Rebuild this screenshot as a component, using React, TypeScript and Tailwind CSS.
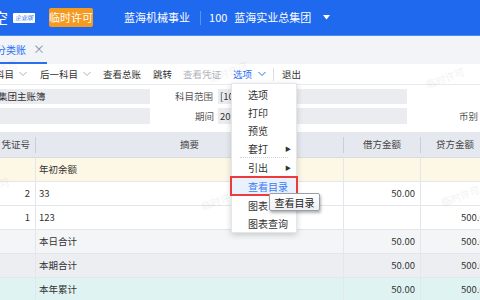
import React from "react";

const F = { fontFamily: '"Noto Sans CJK SC", "Noto Sans", sans-serif' } as const;

function Chev({ color = "#8a94a6", ml = 5 }: { color?: string; ml?: number }) {
  return (
    <svg width="8" height="6" viewBox="0 0 8 6" className="shrink-0" style={{ marginLeft: ml }}>
      <path d="M0.5 1 L4 4.5 L7.5 1" fill="none" stroke={color} strokeWidth="1" />
    </svg>
  );
}

function Wm({ x, y }: { x: number; y: number }) {
  return (
    <div
      className="absolute text-[10px] text-[#000] opacity-[0.05] pointer-events-none whitespace-nowrap -rotate-[20deg]"
      style={{ left: x, top: y }}
    >
      临时许可
    </div>
  );
}

type Row = { bg: string; no?: string; desc: string; debit?: string; credit?: string };

const rows: Row[] = [
  { bg: "bg-[#fdf8e6]", desc: "年初余额" },
  { bg: "bg-white", no: "2", desc: "33", debit: "50.00" },
  { bg: "bg-white", no: "1", desc: "123", debit: "", credit: "500.00" },
  { bg: "bg-[#f3f5f7]", desc: "本日合计", debit: "50.00", credit: "500.00" },
  { bg: "bg-[#eceef2]", desc: "本期合计", debit: "50.00", credit: "500.00" },
  { bg: "bg-[#dff3f2]", desc: "本年累计", debit: "50.00", credit: "500.00" },
];

export default function App() {
  return (
    <div className="relative w-[480px] h-[300px] overflow-hidden bg-white text-[#333] whitespace-nowrap" style={F}>
      {/* header */}
      <div className="h-[36px] bg-[#1f69ee] border-b border-[#4b8af3] flex items-center text-white">
        <span className="ml-[-7px] text-[15px] leading-none shrink-0">空</span>
        <span className="ml-[5px] bg-white text-[#1f69ee] text-[6px] leading-none px-[2px] py-[2px] rounded-[1px] italic shrink-0">企业版</span>
        <span className="ml-[14px] bg-[#f59a1f] text-white text-[11px] h-[19px] w-[44px] flex items-center justify-center rounded-[2px] shrink-0">临时许可</span>
        <span className="ml-[31px] text-[11px] shrink-0">蓝海机械事业</span>
        <span className="ml-[10px] w-px h-[14px] bg-[#5a93f3] shrink-0" />
        <span className="ml-[8px] text-[11px] shrink-0">100</span>
        <span className="ml-[7px] text-[11px] shrink-0">蓝海实业总集团</span>
        <svg width="7" height="5" viewBox="0 0 7 5" className="ml-[12px] shrink-0">
          <path d="M0 0 L7 0 L3.5 4.5 Z" fill="white" />
        </svg>
      </div>

      {/* tab bar */}
      <div className="h-[28px] bg-[#f2f4f8] relative flex items-end">
        <div className="h-[28px] w-[47px] flex items-center border-b-2 border-[#2a6ef2] shrink-0">
          <span className="ml-[-4px] text-[10px] text-[#2a6ef2]">分类账</span>
          <span className="ml-[7px] text-[12px] text-[#8a94a6] leading-none">×</span>
        </div>
      </div>

      {/* toolbar */}
      <div className="h-[21px] bg-white flex items-center text-[9.5px] text-[#333] border-b border-[#e8eaee]">
        <span className="ml-[-5px] shrink-0">科目</span>
        <Chev color="#a8b0bf" />
        <span className="ml-[13px] shrink-0">后一科目</span>
        <Chev color="#a8b0bf" />
        <span className="ml-[12px] shrink-0">查看总账</span>
        <span className="ml-[12px] shrink-0">跳转</span>
        <span className="ml-[11px] text-[#b0b4bb] shrink-0">查看凭证</span>
        <span className="ml-[12px] text-[#2a6ef2] shrink-0">选项</span>
        <Chev color="#2a6ef2" ml={6} />
        <span className="ml-[7px] w-px h-[13px] bg-[#d9dde4] shrink-0" />
        <span className="ml-[8px] shrink-0">退出</span>
      </div>

      {/* form */}
      <div className="h-[43px] bg-white relative text-[9.5px]">
        <div className="flex items-center mt-[4px] h-[15px]">
          <div className="w-[150px] h-[15px] bg-[#ebecf0] flex items-center shrink-0">
            <span className="ml-[-2px]">集团主账簿</span>
          </div>
          <span className="ml-[25px] text-[#555] shrink-0">科目范围</span>
          <div className="ml-[5px] w-[189px] h-[15px] bg-[#ebecf0] flex items-center pl-[2px] shrink-0">[10</div>
        </div>
        <div className="flex items-center mt-[4px] h-[16px]">
          <div className="w-[150px] h-[16px] bg-[#ebecf0] shrink-0" />
          <span className="ml-[45px] text-[#555] shrink-0">期间</span>
          <div className="ml-[4px] w-[189px] h-[16px] bg-[#ebecf0] flex items-center pl-[2px] shrink-0">20</div>
          <span className="ml-[52px] text-[#555] shrink-0">币别</span>
        </div>
      </div>

      {/* table header */}
      <div className="h-[26px] bg-[#e5e8ee] flex items-center text-[9.5px] text-[#444] border-b border-[#d7dbe2]">
        <div className="w-[36px] shrink-0 flex items-center justify-end pr-[5px] h-[16px] border-r border-[#c9ced8]">凭证号</div>
        <div className="w-[308px] shrink-0 flex items-center justify-center h-[16px] border-r border-[#c9ced8]">摘要</div>
        <div className="w-[77px] shrink-0 flex items-center justify-center h-[16px] border-r border-[#c9ced8]">借方金额</div>
        <div className="w-[70px] shrink-0 flex items-center pl-[15px] h-[16px]">贷方金额</div>
      </div>

      {/* rows */}
      {rows.map((r, i) => (
        <div key={i} className={`h-[24px] flex text-[9.5px] text-[#333] border-b border-[#e3e6eb] ${r.bg}`}>
          <div className="w-[36px] shrink-0 flex items-center justify-end pr-[5px] border-r border-[#e3e6eb]">{r.no}</div>
          <div className="w-[308px] shrink-0 flex items-center pl-[3px] border-r border-[#e3e6eb]">{r.desc}</div>
          <div className="w-[77px] shrink-0 flex items-center justify-end pr-[5px] border-r border-[#e3e6eb]">{r.debit}</div>
          <div className="w-[70px] shrink-0 flex items-center pl-[40px]">{r.credit}</div>
        </div>
      ))}

      {/* watermarks */}
      <Wm x={-22} y={62} />
      <Wm x={208} y={64} />
      <Wm x={425} y={70} />
      <Wm x={-30} y={180} />
      <Wm x={200} y={192} />
      <Wm x={440} y={188} />

      {/* dropdown menu */}
      <div className="absolute left-[231px] top-[83px] w-[66px] bg-white shadow-[0_2px_6px_rgba(0,0,0,0.18)] border border-[#e4e6ea] text-[10px] text-[#333] pt-[1px]">
        <div className="h-[18px] flex items-center pl-[16px]">选项</div>
        <div className="h-[18px] flex items-center pl-[16px]">打印</div>
        <div className="h-[18px] flex items-center pl-[16px]">预览</div>
        <div className="h-[18px] flex items-center pl-[16px] justify-between pr-[5px]">
          <span>套打</span>
          <span className="text-[6px]">▶</span>
        </div>
        <div className="mx-[8px] border-t border-dotted border-[#cfd3da]" />
        <div className="h-[18px] flex items-center pl-[16px] justify-between pr-[5px]">
          <span>引出</span>
          <span className="text-[6px]">▶</span>
        </div>
        <div className="h-[20px] -mx-[2px] flex items-center pl-[16px] bg-[#e8f1fd] text-[#3a7bf2] border-2 border-[#ec3b3b]">查看目录</div>
        <div className="h-[18px] flex items-center pl-[16px]">图表</div>
        <div className="h-[18px] flex items-center pl-[16px]">图表查询</div>
      </div>

      {/* tooltip */}
      <div className="absolute left-[269px] top-[193px] w-[51px] h-[18px] flex items-center justify-center bg-gradient-to-b from-white to-[#eef0f3] border border-[#9aa0a8] shadow-[1px_2px_3px_rgba(0,0,0,0.3)] text-[10px] text-[#222] rounded-[2px]">
        查看目录
      </div>
    </div>
  );
}
